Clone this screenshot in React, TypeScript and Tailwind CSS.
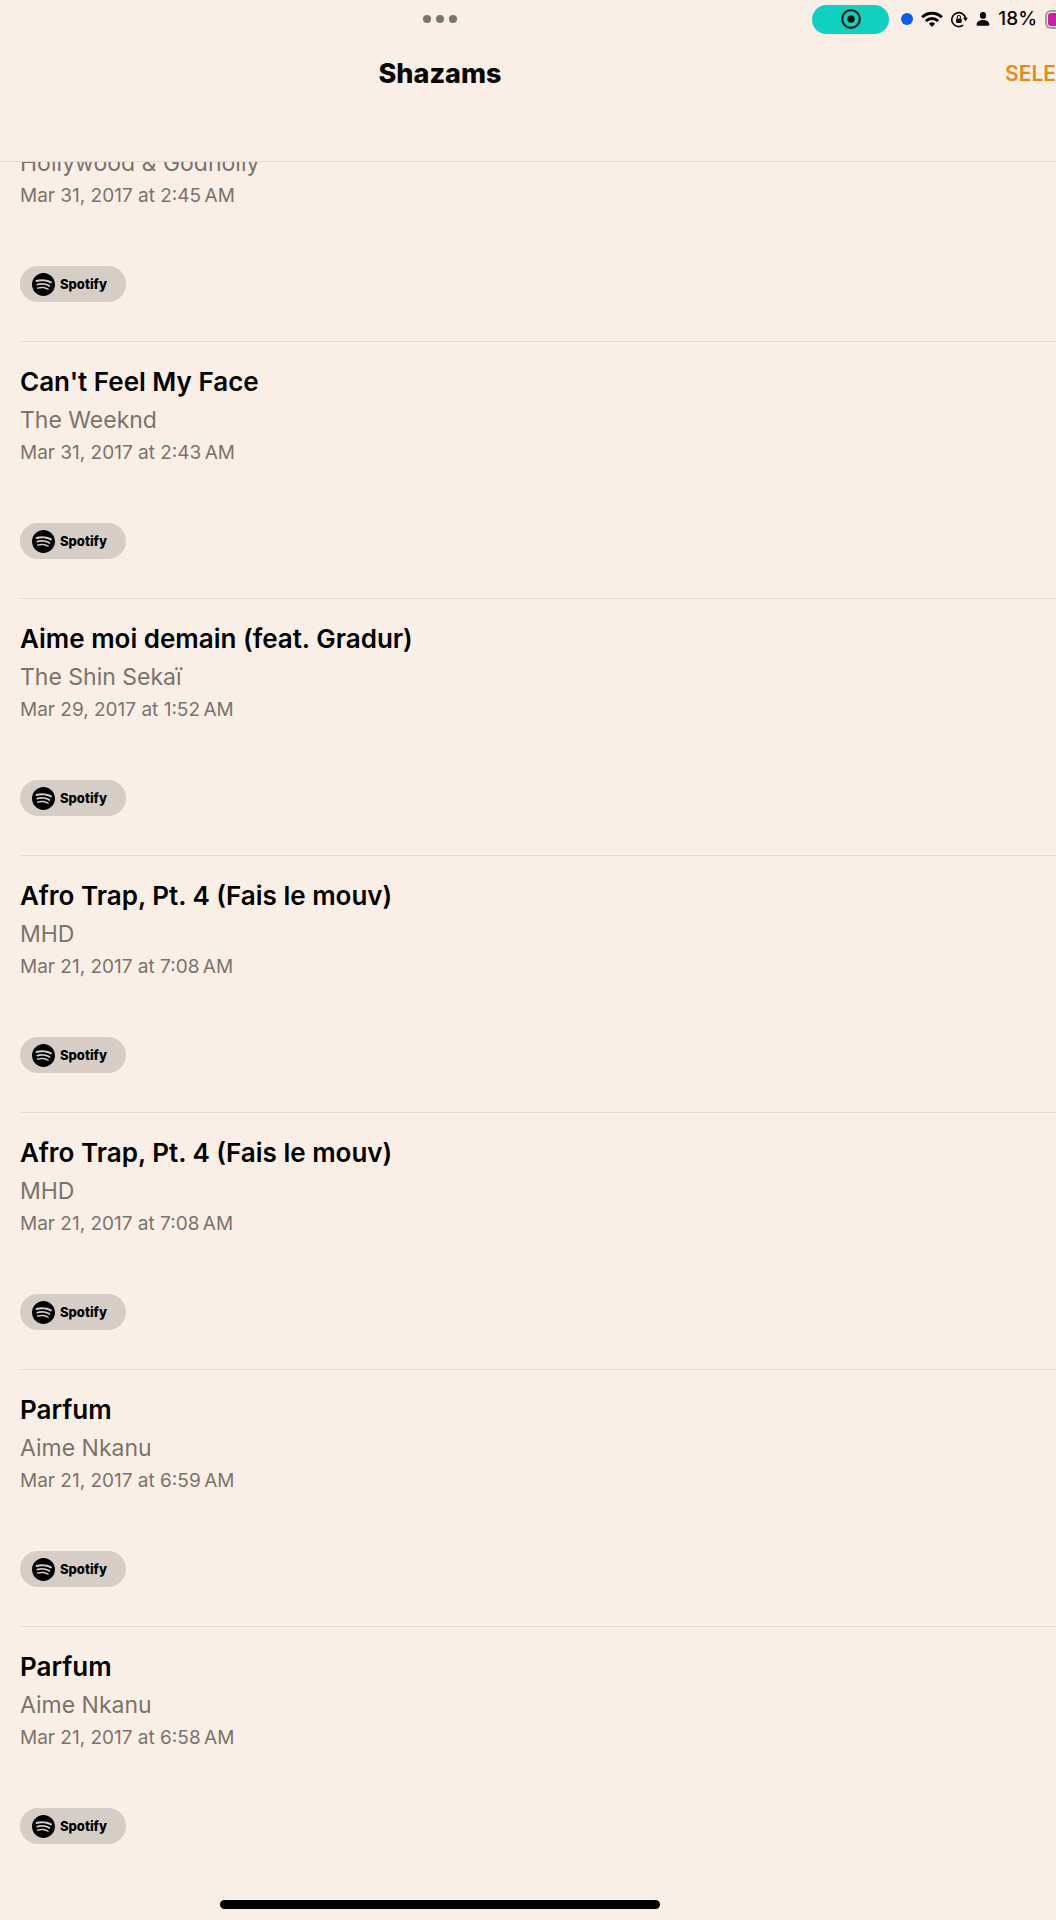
import { SiSpotify } from "react-icons/si";

type Shazam = { title?: string; artist: string; date: string };

const SHAZAMS: Shazam[] = [
  { artist: "Hollywood & Godholly", date: "Mar 31, 2017 at 2:45\u202fAM" },
  { title: "Can't Feel My Face", artist: "The Weeknd", date: "Mar 31, 2017 at 2:43\u202fAM" },
  { title: "Aime moi demain (feat. Gradur)", artist: "The Shin Sekaï", date: "Mar 29, 2017 at 1:52\u202fAM" },
  { title: "Afro Trap, Pt. 4 (Fais le mouv)", artist: "MHD", date: "Mar 21, 2017 at 7:08\u202fAM" },
  { title: "Afro Trap, Pt. 4 (Fais le mouv)", artist: "MHD", date: "Mar 21, 2017 at 7:08\u202fAM" },
  { title: "Parfum", artist: "Aime Nkanu", date: "Mar 21, 2017 at 6:59\u202fAM" },
  { title: "Parfum", artist: "Aime Nkanu", date: "Mar 21, 2017 at 6:58\u202fAM" },
];

function RecordIcon() {
  return (
    <svg width="20" height="20" viewBox="0 0 20 20" aria-hidden="true">
      <circle cx="10" cy="10" r="8.8" fill="none" stroke="#071a18" strokeWidth="2.2" />
      <circle cx="10" cy="10" r="3.8" fill="#071a18" />
    </svg>
  );
}

function WifiIcon() {
  return (
    <svg width="22" height="16" viewBox="0 0 22 16" fill="none" stroke="#0a0806" strokeWidth="3" aria-hidden="true">
      <path d="M1.2 6.2a14 14 0 0 1 19.6 0" />
      <path d="M4.9 10a8.8 8.8 0 0 1 12.2 0" />
      <path d="M11 16 7.9 12.7a4.5 4.5 0 0 1 6.2 0Z" fill="#0a0806" stroke="none" />
    </svg>
  );
}

function RotationLockIcon() {
  return (
    <svg width="17" height="17" viewBox="0 0 17 17" fill="none" stroke="#0a0806" aria-hidden="true">
      <path d="M12.2 14.1A7 7 0 1 1 14.6 7" strokeWidth="1.6" />
      <path d="M12 6.7h5l-2.5 3.6Z" fill="#0a0806" stroke="none" />
      <rect x="5.1" y="7.4" width="5.6" height="4.5" rx="0.8" fill="#0a0806" stroke="none" />
      <path d="M6.3 7.6V6.1a1.6 1.6 0 0 1 3.2 0v1.5" strokeWidth="1.1" />
    </svg>
  );
}

function PersonIcon() {
  return (
    <svg width="14" height="14" viewBox="0 0 14 14" fill="#0a0806" aria-hidden="true">
      <ellipse cx="7" cy="3.4" rx="3.1" ry="3.4" />
      <path d="M0.6 12.4C0.6 10 3.4 8 7 8s6.4 2 6.4 4.4c0 .9-.5 1.3-1.3 1.3H1.9c-.8 0-1.3-.4-1.3-1.3Z" />
    </svg>
  );
}

function StatusBar() {
  return (
    <div className="grid h-[38px] grid-cols-12 items-center">
      <button aria-label="Window options" className="col-span-10 col-start-1 row-start-1 flex gap-[5px] justify-self-center">
        <span className="size-2 rounded-full bg-[#7d746d]" />
        <span className="size-2 rounded-full bg-[#7d746d]" />
        <span className="size-2 rounded-full bg-[#7d746d]" />
      </button>
      <div className="col-span-12 col-start-1 row-start-1 flex items-center gap-2 justify-self-end">
        <span className="mr-1 flex h-[29px] w-[77px] items-center justify-center rounded-full bg-[#12d0c0]">
          <RecordIcon />
        </span>
        <span className="size-3 rounded-full bg-[#0b5cf0]" />
        <WifiIcon />
        <RotationLockIcon />
        <PersonIcon />
        <span className="text-[19px] leading-6 font-medium text-[#0a0806]">18%</span>
        <span className="h-[19px] w-[11px] rounded-l-[6px] border-2 border-r-0 border-[#a39b96] p-px pr-0">
          <span className="block h-full rounded-l-[3px] bg-[#c322a0]" />
        </span>
      </div>
    </div>
  );
}

function SpotifyButton() {
  return (
    <button className="mt-[58px] flex h-9 w-[106px] shrink-0 items-center gap-[5px] rounded-full bg-[#d6cdc7] pl-3 text-black">
      <SiSpotify className="size-[23px]" aria-hidden="true" />
      <span className="text-[13px] leading-4 font-extrabold">Spotify</span>
    </button>
  );
}

function ShazamRow({ title, artist, date }: Shazam) {
  return (
    <li
      className={
        "ml-5 flex flex-col items-start border-b border-[#e5dcd5] pb-[39px] last:border-b-0 " +
        (title ? "pt-[23px]" : "h-[180px] justify-end overflow-hidden")
      }
    >
      {title && <h2 className="mb-[5px] text-[26px] leading-[34px] font-semibold text-black">{title}</h2>}
      <p className="shrink-0 text-[23px] leading-8 text-[#7b736b]">{artist}</p>
      <p className="mt-[5px] shrink-0 text-[19px] leading-6 text-[#7b736b]">{date}</p>
      <SpotifyButton />
    </li>
  );
}

export default function App() {
  return (
    <div className="min-h-screen overflow-hidden border-b border-[#ddd3cc] bg-[#faefe6] font-['Inter',sans-serif]">
      <header className="border-b border-[#e2d9d2]">
        <StatusBar />
        <div className="grid grid-cols-12 items-center pt-[18px] pb-[69px]">
          <h1 className="col-span-10 col-start-1 row-start-1 justify-self-center text-[27px] leading-9 font-extrabold text-[#0a0806]">
            Shazams
          </h1>
          <button
            aria-label="Select"
            className="col-span-12 col-start-1 row-start-1 justify-self-end text-[21px] leading-9 font-semibold text-[#e18d1d]"
          >
            SELE
          </button>
        </div>
      </header>
      <main>
        <ul>
          {SHAZAMS.map((s, i) => (
            <ShazamRow key={i} {...s} />
          ))}
        </ul>
      </main>
      <footer className="flex w-5/6 justify-center pt-[17px] pb-[11px]">
        <span className="h-[9px] w-1/2 rounded-full bg-black" />
      </footer>
    </div>
  );
}
